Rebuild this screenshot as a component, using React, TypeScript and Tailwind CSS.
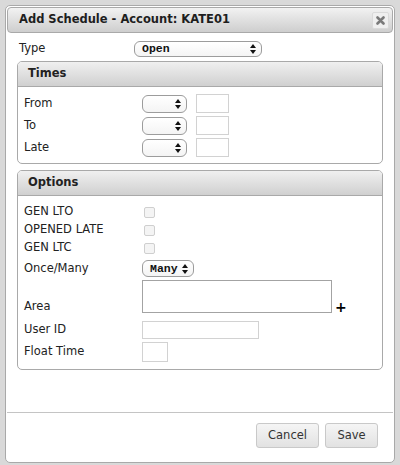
import React from "react";

function Arrows() {
  return (
    <svg width="6" height="10" viewBox="0 0 6 10" className="shrink-0">
      <path d="M3 0L6 4H0z M3 10L0 6h6z" fill="#111" />
    </svg>
  );
}

function Select({ w, h, text }: { w: string; h: string; text?: string }) {
  return (
    <div
      className={`${w} ${h} flex items-center justify-between border border-[#9c9c9c] rounded-[6px] bg-gradient-to-b from-white to-[#f4f4f4] pl-[7px] pr-[5px] font-['Liberation_Mono',monospace] font-bold text-[11.5px] text-[#111]`}
    >
      <span>{text ?? ""}</span>
      <Arrows />
    </div>
  );
}

function Checkbox() {
  return <div className="ml-[2px] w-[11px] h-[11px] border border-[#cfcfcf] rounded-[2px] bg-[#f4f4f4]" />;
}

function Header({ title }: { title: string }) {
  return (
    <div className="h-[25px] flex items-center pl-[10px] border-b border-[#a9a9a9] rounded-t-[4px] bg-gradient-to-b from-[#f0f0f0] to-[#d0d0d0] font-bold text-[#222]">
      {title}
    </div>
  );
}

export default function App() {
  return (
    <div className="w-[400px] h-[465px] bg-[#d9d9d9] pt-[5px] px-[5px] font-['DejaVu_Sans',sans-serif] text-[11.5px] text-[#222]">
      <div className="h-[458px] bg-white border border-[#a9a9a9] rounded-[5px] p-[1px] flex flex-col">
        <div className="h-[26px] shrink-0 flex items-center justify-between border border-[#a9a9a9] rounded-[4px] bg-gradient-to-b from-[#f2f2f2] to-[#cecece] pl-[11px] pr-[3px]">
          <span className="font-bold text-[#1e1e1e]">Add Schedule - Account: KATE01</span>
          <div className="w-[17px] h-[17px] flex items-center justify-center rounded-[2px] bg-[#efefef] border border-[#dadada]">
            <svg width="9" height="9" viewBox="0 0 9 9">
              <path d="M1.5 1.5L7.5 7.5M7.5 1.5L1.5 7.5" stroke="#7a7a7a" strokeWidth="2.6" strokeLinecap="round" />
            </svg>
          </div>
        </div>

        <div className="flex-1 px-[10px] pt-[7px] flex flex-col">
          <div className="h-[17px] flex items-center">
            <span className="w-[117px] pl-[2px]">Type</span>
            <Select w="w-[128px]" h="h-[16px]" text="Open" />
          </div>

          <div className="mt-[4px] border border-[#a9a9a9] rounded-[5px] flex flex-col">
            <Header title="Times" />
            <div className="pt-[7px] pb-[6px] flex flex-col gap-[3px]">
              {["From", "To", "Late"].map((l) => (
                <div key={l} className="h-[19px] flex items-center pl-[6px]">
                  <span className="w-[118px]">{l}</span>
                  <Select w="w-[45px]" h="h-[18px]" />
                  <div className="ml-[9px] w-[33px] h-[19px] border border-[#d2d2d2] bg-white" />
                </div>
              ))}
            </div>
          </div>

          <div className="mt-[6px] border border-[#a9a9a9] rounded-[5px] flex flex-col">
            <Header title="Options" />
            <div className="pt-[7px] pb-[7px] flex flex-col">
              {["GEN LTO", "OPENED LATE", "GEN LTC"].map((l) => (
                <div key={l} className="h-[18px] flex items-center pl-[6px]">
                  <span className="w-[118px]">{l}</span>
                  <Checkbox />
                </div>
              ))}
              <div className="mt-[3px] h-[17px] flex items-center pl-[6px]">
                <span className="w-[118px]">Once/Many</span>
                <Select w="w-[52px]" h="h-[17px]" text="Many" />
              </div>
              <div className="mt-[3px] h-[33px] flex items-end pl-[6px]">
                <span className="w-[118px] leading-[14px]">Area</span>
                <div className="w-[190px] h-[33px] border border-[#a3a3a3] bg-white" />
                <span className="ml-[3px] font-bold text-[14px] leading-[12px] text-black">+</span>
              </div>
              <div className="mt-[8px] h-[18px] flex items-center pl-[6px]">
                <span className="w-[118px]">User ID</span>
                <div className="w-[117px] h-[18px] border border-[#d2d2d2] bg-white" />
              </div>
              <div className="mt-[3px] h-[20px] flex items-center pl-[6px]">
                <span className="w-[118px]">Float Time</span>
                <div className="w-[26px] h-[20px] border border-[#d2d2d2] bg-white" />
              </div>
            </div>
          </div>
        </div>

        <div className="shrink-0 border-t border-[#c4c4c4] pt-[10px] pb-[13px] pr-[15px] flex justify-end gap-[6px]">
          <div className="w-[63px] h-[25px] flex items-center justify-center border border-[#c9c9c9] rounded-[3px] bg-gradient-to-b from-[#f5f5f5] to-[#e2e2e2] text-[#333]">
            Cancel
          </div>
          <div className="w-[53px] h-[25px] flex items-center justify-center border border-[#c9c9c9] rounded-[3px] bg-gradient-to-b from-[#f5f5f5] to-[#e2e2e2] text-[#333]">
            Save
          </div>
        </div>
      </div>
    </div>
  );
}
